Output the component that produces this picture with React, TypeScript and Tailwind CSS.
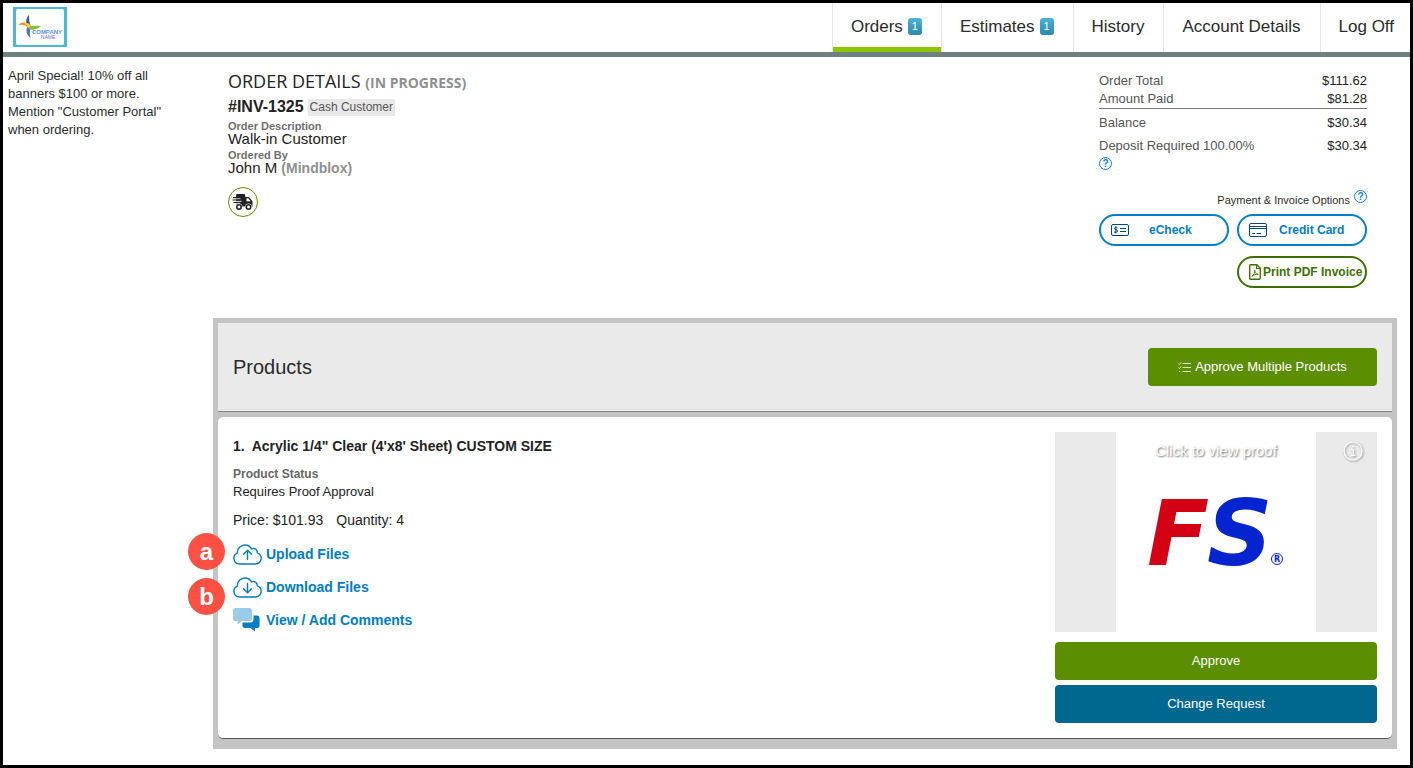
import type { ReactNode } from "react";

const tabs = [
  { label: "Orders", count: 1, active: true },
  { label: "Estimates", count: 1 },
  { label: "History" },
  { label: "Account Details" },
  { label: "Log Off" },
];

function CompanyLogo() {
  return (
    <svg width="54" height="40" viewBox="0 0 54 40" role="img" aria-label="Company Name">
      <rect width="54" height="40" fill="#4db8d6" />
      <rect x="3" y="2" width="48" height="36" rx="2" fill="#fff" />
      <path d="M16 8c-3 3-4 8-1 12l3-1c-2-3-2-7-2-11z" fill="#3554b4" />
      <path d="M17.500 31c-4-3-5-7-3-12l3 1c-1 4-1 7 0 11z" fill="#4a6fd0" />
      <path d="M5 18c4-4 10-3 12 1l-2 2c-2-3-5-4-10-3z" fill="#f58a1f" />
      <path d="M15 18c3 2 7 0 13 1-4 4-10 5-13 2z" fill="#7cc242" />
      <path d="M11 16c3-1 6 1 7 3l-3 2c-1-2-2-4-4-5z" fill="#f3d02b" />
      <text
        x="34"
        y="27"
        textAnchor="middle"
        fontSize="6"
        fontWeight="bold"
        fontFamily="Liberation Sans, sans-serif"
        fill="#5b93e6"
      >
        COMPANY
      </text>
      <text
        x="35"
        y="32"
        textAnchor="middle"
        fontSize="5"
        fontFamily="Liberation Sans, sans-serif"
        fill="#6a70b0"
      >
        NAME
      </text>
    </svg>
  );
}

function TruckIcon() {
  return (
    <svg width="22" height="18" viewBox="0 0 22 18" aria-hidden="true">
      <path d="M4.500 1H12q1.200 0 1.200 1.200V4H16q1 0 1.700.8L20 7.500q.5.600.5 1.500v4.500H4V3z" fill="#222" />
      <path d="M14.500 5.200h1.800l2.400 3h-4.200z" fill="#fff" />
      <path d="M0 5.800h8.500M1 8.300h8.500M2 10.800h6" stroke="#fff" strokeWidth="1" />
      <path d="M1 4.600h8M.5 7h8M1.500 9.500h7" stroke="#222" strokeWidth="1.200" />
      <circle cx="7" cy="14" r="3.400" fill="#fff" />
      <circle cx="7" cy="14" r="2.200" fill="none" stroke="#222" strokeWidth="1.600" />
      <circle cx="16.500" cy="14" r="3.400" fill="#fff" />
      <circle cx="16.500" cy="14" r="2.200" fill="none" stroke="#222" strokeWidth="1.600" />
    </svg>
  );
}

function CheckIcon() {
  return (
    <svg width="18" height="12" viewBox="0 0 18 12" fill="none" stroke="#00467f" aria-hidden="true">
      <rect x=".5" y=".5" width="17" height="11" rx="1.500" />
      <path d="M6.500 3.800C5.500 3 3.300 3 3.300 4.500s3.200 1 3.200 2.500S4.200 8.700 3 7.800M4.900 2.300v7.200M9 4.500h6M9 7.500h6" />
    </svg>
  );
}

function CardIcon() {
  return (
    <svg width="18" height="14" viewBox="0 0 18 14" fill="none" stroke="#00467f" aria-hidden="true">
      <rect x=".5" y=".5" width="17" height="13" rx="1.500" />
      <path d="M.5 3.500h17M.5 5.500h17M3 10.500h3M7.500 10.500H12" />
    </svg>
  );
}

function PdfIcon() {
  return (
    <svg width="12" height="16" viewBox="0 0 12 16" fill="none" stroke="#3f6f00" aria-hidden="true">
      <path d="M1.700.7h6.100l3.500 3.600v10q0 1-1 1H1.700q-1 0-1-1V1.700q0-1 1-1z" strokeWidth="1.400" />
      <path d="M7.500.8v3.700h3.700" strokeWidth="1.200" />
      <path d="M2.800 12.300c1.800-.8 3.200-4 2.900-6 .3 2.700 1.700 4.300 3.600 4-2-.3-4.700.4-6.500 2z" strokeWidth=".9" />
    </svg>
  );
}

function ChecklistIcon() {
  return (
    <svg width="13" height="11" viewBox="0 0 13 11" fill="none" stroke="#dbe8c0" aria-hidden="true">
      <path d="M4.500 1.500H13M4.500 5.500H13M4.500 9.500H13" />
      <path d="M.3 1.500l1 1L3.300.3M.3 5.500l1 1 2-2.200M1 9.500h1.200" />
    </svg>
  );
}

function CloudIcon({ arrow }: { arrow: string }) {
  return (
    <svg
      width="29"
      height="21"
      viewBox="0 0 29 21"
      fill="none"
      stroke="#007cc3"
      strokeWidth="1.400"
      strokeLinecap="round"
      strokeLinejoin="round"
      aria-hidden="true"
    >
      <path d="M6.500 20A5.700 5.700 0 0 1 4.300 9.100C4 4.500 7.800 1 12 1c3 0 5.300 1.400 6.600 3.900 2.700-1.400 6 .6 5.700 3.900 2.300.8 3.900 2.800 3.900 5.400 0 3.300-2.500 5.800-5.700 5.800z" />
      <path d={arrow} />
    </svg>
  );
}

function CommentsIcon() {
  return (
    <svg width="27" height="24" viewBox="0 0 27 24" aria-hidden="true">
      <path d="M2.500 0h14Q19 0 19 2.500v8q0 2.500-2.500 2.500H9l-4.500 3.500V13h-2Q0 13 0 10.500v-8Q0 0 2.500 0z" fill="#9bcbe8" />
      <path d="M20.500 7.500H24q2.500 0 2.500 2.500v7.500q0 2.500-2.500 2.500h-2v3.500L17.500 20H12q-2.500 0-2.500-2.500v-3h7.500q3.500 0 3.500-3.500z" fill="#007cc3" />
    </svg>
  );
}

function HelpButton({ label }: { label: string }) {
  return (
    <button
      type="button"
      aria-label={label}
      className="flex size-[13px] shrink-0 items-center justify-center rounded-full border border-[#0a80d0] text-[10px] leading-none font-bold text-[#0a80d0]"
    >
      ?
    </button>
  );
}

function FileLink({ icon, children }: { icon: ReactNode; children: ReactNode }) {
  return (
    <li className="flex">
      <a href="#" className="flex h-[22px] items-center gap-1 text-[14px] font-bold text-[#007cc3]">
        <span className="w-[29px]">{icon}</span>
        {children}
      </a>
    </li>
  );
}

function Header() {
  return (
    <header className="flex items-start justify-between border-b-[5px] border-[#6f8080] pl-[10px]">
      <a href="#" className="mt-1">
        <CompanyLogo />
      </a>
      <nav className="flex h-[49px]">
        {tabs.map((tab) => (
          <a
            key={tab.label}
            href="#"
            aria-current={tab.active ? "page" : undefined}
            className={`flex items-center gap-[5px] border-l border-[#e6e6e6] pr-[19px] pb-0.5 pl-[18px] text-[17px] last:pr-4 ${
              tab.active ? "shadow-[inset_0_-5px_0_#8dc400]" : ""
            }`}
          >
            {tab.label}
            {tab.count && (
              <span className="flex h-[17px] w-[14px] items-center justify-center rounded-[3px] bg-linear-to-b from-[#4fb4d4] to-[#2b88ab] text-[11px] text-white">
                {tab.count}
              </span>
            )}
          </a>
        ))}
      </nav>
    </header>
  );
}

function OrderDetails() {
  return (
    <section className="text-[15px] text-[#222]">
      <h1 className="font-['Open_Sans',sans-serif] text-[18px] leading-6">
        ORDER DETAILS <span className="text-[14px] font-bold text-[#8f8f8f]">(IN PROGRESS)</span>
      </h1>
      <div className="mt-0.5 flex h-5 items-center gap-1">
        <strong className="text-[16px]">#INV-1325</strong>
        <span className="mt-px bg-[#e9e9e9] px-0.5 text-[12px] leading-[17px] text-[#555]">Cash Customer</span>
      </div>
      <dl className="mt-[3px] leading-[14px]">
        <dt className="text-[11px] leading-3 font-bold text-[#6f6f6f]">Order Description</dt>
        <dd>Walk-in Customer</dd>
        <dt className="mt-[3px] text-[11px] leading-3 font-bold text-[#6f6f6f]">Ordered By</dt>
        <dd>
          John M <strong className="text-[14px] text-[#8f8f8f]">(Mindblox)</strong>
        </dd>
      </dl>
      <div className="mt-3 flex size-[30px] items-center justify-center rounded-full border border-[#5b8e00]">
        <TruckIcon />
      </div>
    </section>
  );
}

function OrderTotals() {
  return (
    <table className="w-full text-[13px] leading-[18px] text-[#555]">
      <tbody>
        <tr>
          <th scope="row" className="text-left font-normal">Order Total</th>
          <td className="text-right text-[#222]">$111.62</td>
        </tr>
        <tr className="border-b border-[#777]">
          <th scope="row" className="text-left font-normal">Amount Paid</th>
          <td className="text-right text-[#222]">$81.28</td>
        </tr>
        <tr>
          <th scope="row" className="pt-[5px] text-left font-normal">Balance</th>
          <td className="pt-[5px] text-right text-[#222]">$30.34</td>
        </tr>
        <tr className="align-top">
          <th scope="row" className="pt-[5px] text-left font-normal">
            Deposit Required 100.00%
            <span className="mt-0.5 block">
              <HelpButton label="About the deposit" />
            </span>
          </th>
          <td className="pt-[5px] text-right text-[#222]">$30.34</td>
        </tr>
      </tbody>
    </table>
  );
}

function PaymentOptions() {
  const pill = "flex h-8 w-[130px] items-center rounded-full border-2 bg-white text-[12px] font-bold";
  return (
    <div className="mt-5 flex flex-col items-end">
      <div className="flex items-start gap-1 text-[11px] leading-5">
        Payment &amp; Invoice Options
        <HelpButton label="About payment options" />
      </div>
      <div className="mt-1 flex w-full flex-wrap justify-end gap-x-2 gap-y-[10px]">
        <button type="button" className={`${pill} gap-5 border-[#0080c8] pl-[10px] text-[#007cc3]`}>
          <CheckIcon />
          eCheck
        </button>
        <button type="button" className={`${pill} gap-3 border-[#0080c8] pl-[10px] text-[#007cc3]`}>
          <CardIcon />
          Credit Card
        </button>
        <button type="button" className={`${pill} gap-0.5 border-[#3f6f00] pl-[10px] whitespace-nowrap text-[#3f6f00]`}>
          <PdfIcon />
          Print PDF Invoice
        </button>
      </div>
    </div>
  );
}

function ProofPreview() {
  return (
    <button type="button" className="relative flex h-[200px] w-full justify-center bg-[#eaeaea]">
      <svg width="200" height="200" viewBox="0 0 200 200" role="img" aria-label="FS proof">
        <rect width="200" height="200" fill="#fff" />
        <g fontFamily="DejaVu Sans, sans-serif" fontWeight="bold">
          <text x="31" y="133" fontSize="91" fontStyle="italic" fill="#d40014">
            F
          </text>
          <text x="91" y="133" fontSize="91" fontStyle="italic" fill="#0424d0">
            S
          </text>
          <text x="161" y="130" fontSize="8" textAnchor="middle" fill="#0424d0">
            R
          </text>
        </g>
        <circle cx="161" cy="127" r="5.500" fill="none" stroke="#0424d0" />
      </svg>
      <span className="absolute inset-x-0 top-2.5 text-center text-[15px] leading-[18px] text-white [text-shadow:1px_1px_2px_#666]">
        Click to view proof
      </span>
      <svg
        className="absolute top-[9px] right-[14px] drop-shadow-[1px_1px_1px_#888]"
        width="20"
        height="20"
        viewBox="0 0 20 20"
        fill="none"
        stroke="#fff"
        strokeWidth="1.200"
        aria-hidden="true"
      >
        <circle cx="10" cy="10" r="9" />
        <path d="M8 8.500h2.300V14M8 14.300h4.500M9.300 5.300h1.800" />
      </svg>
    </button>
  );
}

function StepBadge({ children }: { children: ReactNode }) {
  return (
    <span className="flex size-[37px] items-center justify-center rounded-full bg-[#ff5044] text-[24px] font-bold text-white">
      {children}
    </span>
  );
}

function Products() {
  return (
    <section className="bg-[#c4c4c4] px-[5px] pt-[5px] pb-[10px]">
      <div className="flex items-center justify-between border-b border-[#888] bg-[#eaeaea] px-[15px] py-[25px]">
        <h2 className="text-[20px]">Products</h2>
        <button
          type="button"
          className="flex h-[38px] w-[229px] items-center justify-center gap-1 rounded-[4px] bg-[#5b8e00] text-[13px] text-white"
        >
          <ChecklistIcon />
          Approve Multiple Products
        </button>
      </div>
      <article className="mt-[5px] flex justify-between gap-5 rounded-[5px] border-b border-[#555] bg-white p-[15px] text-[#222]">
        <div>
          <h3 className="mt-1 text-[14px] leading-5 font-bold">
            <span className="mr-[7px]">1.</span>Acrylic 1/4" Clear (4'x8' Sheet) CUSTOM SIZE
          </h3>
          <div className="mt-[9px] text-[12px] leading-[18px] font-bold text-[#666]">Product Status</div>
          <div className="text-[13px] leading-[18px]">Requires Proof Approval</div>
          <div className="mt-[10px] flex gap-[13px] text-[14px] leading-[18px]">
            <span>Price: $101.93</span>
            <span>Quantity: 4</span>
          </div>
          <div className="relative mt-[14px]">
            <ul className="flex flex-col gap-[11px]">
              <FileLink icon={<CloudIcon arrow="M14.500 15.500V6.500M10.500 10.300l4-4 4 4" />}>Upload Files</FileLink>
              <FileLink icon={<CloudIcon arrow="M14.500 6.500v9M10.500 11.700l4 4 4-4" />}>Download Files</FileLink>
              <FileLink icon={<CommentsIcon />}>View / Add Comments</FileLink>
            </ul>
            <div className="absolute -top-[10px] -left-[45px] flex flex-col gap-2">
              <StepBadge>a</StepBadge>
              <StepBadge>b</StepBadge>
            </div>
          </div>
        </div>
        <div className="w-[322px] shrink-0 text-[13px] text-white">
          <ProofPreview />
          <button type="button" className="mt-[10px] h-[38px] w-full rounded-[4px] bg-[#5b8e00]">
            Approve
          </button>
          <button type="button" className="mt-[5px] h-[38px] w-full rounded-[4px] bg-[#00688f]">
            Change Request
          </button>
        </div>
      </article>
    </section>
  );
}

export default function App() {
  return (
    <div className="min-h-screen border-[3px] border-black bg-white font-['Liberation_Sans',sans-serif] text-[#2b2b2b]">
      <Header />
      <div className="flex">
        <aside className="w-[210px] shrink-0 pt-[10px] pr-8 pl-[5px] text-[13px] leading-[18px]">
          April Special! 10% off all banners $100 or more. Mention "Customer Portal" when ordering.
        </aside>
        <main className="min-w-0 flex-1 pr-[13px] pb-4">
          <div className="flex justify-between pt-3 pr-[30px] pb-[30px] pl-[15px]">
            <OrderDetails />
            <div className="w-[268px] pt-[3px]">
              <OrderTotals />
              <PaymentOptions />
            </div>
          </div>
          <Products />
        </main>
      </div>
    </div>
  );
}
